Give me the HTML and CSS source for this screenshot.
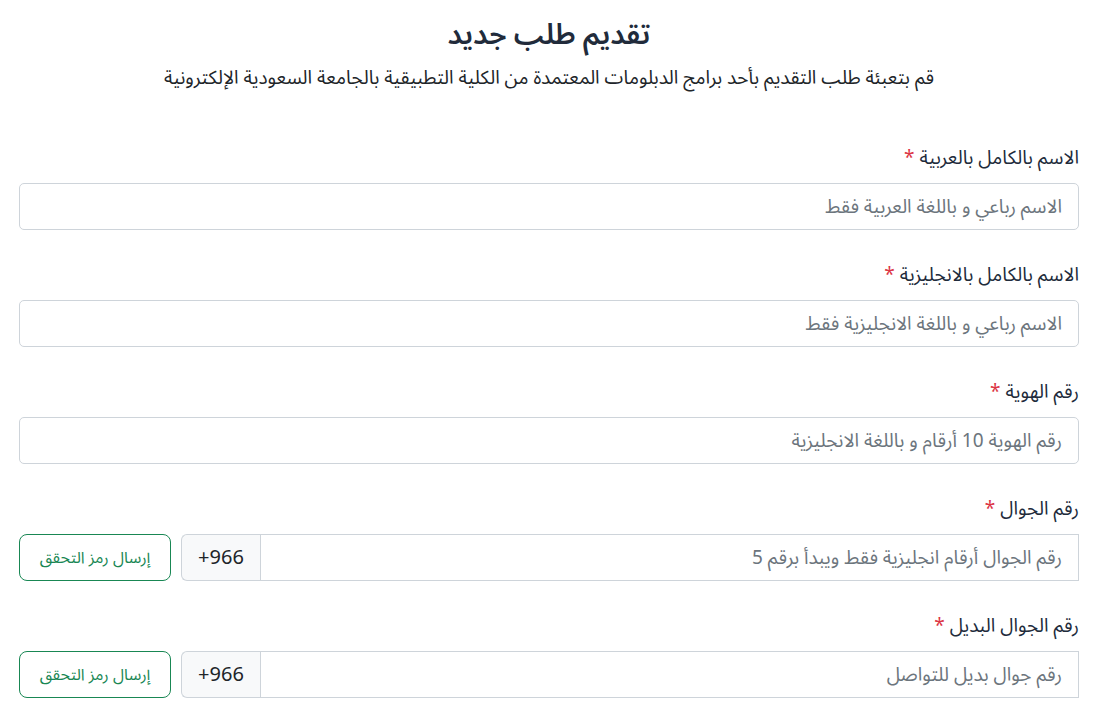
FILE: index.html
```html
<!DOCTYPE html>
<html lang="ar" dir="rtl">
<head>
<meta charset="utf-8">
<title>تقديم طلب جديد</title>
<link rel="stylesheet" href="styles.css">
</head>
<body>
<main class="page">
  <header class="intro">
    <h1 class="intro-title">تقديم طلب جديد</h1>
    <p class="intro-text">قم بتعبئة طلب التقديم بأحد برامج الدبلومات المعتمدة من الكلية التطبيقية بالجامعة السعودية الإلكترونية</p>
  </header>

  <form class="apply-form">
    <div class="field">
      <label class="field-label" for="name-ar">الاسم بالكامل بالعربية <span class="req">*</span></label>
      <input class="field-input" id="name-ar" type="text" placeholder="الاسم رباعي و باللغة العربية فقط">
    </div>

    <div class="field">
      <label class="field-label" for="name-en">الاسم بالكامل بالانجليزية <span class="req">*</span></label>
      <input class="field-input" id="name-en" type="text" placeholder="الاسم رباعي و باللغة الانجليزية فقط">
    </div>

    <div class="field">
      <label class="field-label" for="national-id">رقم الهوية <span class="req">*</span></label>
      <input class="field-input" id="national-id" type="text" placeholder="رقم الهوية 10 أرقام و باللغة الانجليزية">
    </div>

    <div class="field">
      <label class="field-label" for="mobile">رقم الجوال <span class="req">*</span></label>
      <div class="phone-row">
        <div class="input-group">
          <input class="field-input group-input" id="mobile" type="text" placeholder="رقم الجوال أرقام انجليزية فقط ويبدأ برقم 5">
          <span class="group-prefix">+966</span>
        </div>
        <button class="verify-btn" type="button">إرسال رمز التحقق</button>
      </div>
    </div>

    <div class="field">
      <label class="field-label" for="mobile-alt">رقم الجوال البديل <span class="req">*</span></label>
      <div class="phone-row">
        <div class="input-group">
          <input class="field-input group-input" id="mobile-alt" type="text" placeholder="رقم جوال بديل للتواصل">
          <span class="group-prefix">+966</span>
        </div>
        <button class="verify-btn" type="button">إرسال رمز التحقق</button>
      </div>
    </div>
  </form>
</main>
</body>
</html>
```

FILE: styles.css
```css
* {
  box-sizing: border-box;
}

body {
  margin: 0;
  background: #ffffff;
  color: #212b3b;
  font-family: "Noto Sans Arabic", "Noto Sans", "DejaVu Sans", sans-serif;
}

.page {
  padding: 0 27px 0 19px;
}

.intro {
  text-align: center;
  padding-top: 17px;
}

.intro-title {
  margin: 0;
  font-size: 28.5px;
  line-height: 36px;
  font-weight: 600;
  color: #212b3b;
}

.intro-text {
  margin: 11px 0 0;
  font-size: 19px;
  line-height: 28px;
  color: #212529;
}

.apply-form {
  margin-top: 53px;
}

.field {
  margin-bottom: 32px;
}

.field-label {
  display: block;
  font-size: 19px;
  line-height: 27px;
  margin-bottom: 11px;
  color: #212b3b;
}

.req {
  color: #dc3545;
}

.field-input {
  display: block;
  width: 100%;
  height: 47px;
  padding: 0 16px;
  border: 1px solid #ced4da;
  border-radius: 5px;
  background: #ffffff;
  font-family: inherit;
  font-size: 19px;
  color: #212529;
  outline: none;
}

.field-input::placeholder {
  color: #6c757d;
}

.phone-row {
  display: flex;
  gap: 10px;
}

.input-group {
  flex: 1;
  display: flex;
}

.group-input {
  flex: 1;
  width: auto;
  border-radius: 0;
}

.group-prefix {
  width: 79px;
  height: 47px;
  display: flex;
  align-items: center;
  justify-content: center;
  background: #f8f9fa;
  border: 1px solid #ced4da;
  border-right: 0;
  border-radius: 6px 0 0 6px;
  font-size: 20px;
  color: #212529;
  direction: ltr;
}

.verify-btn {
  width: 152px;
  height: 47px;
  border: 1px solid #198754;
  border-radius: 8px;
  background: #ffffff;
  color: #198754;
  font-family: inherit;
  font-size: 16px;
  cursor: pointer;
}
```
